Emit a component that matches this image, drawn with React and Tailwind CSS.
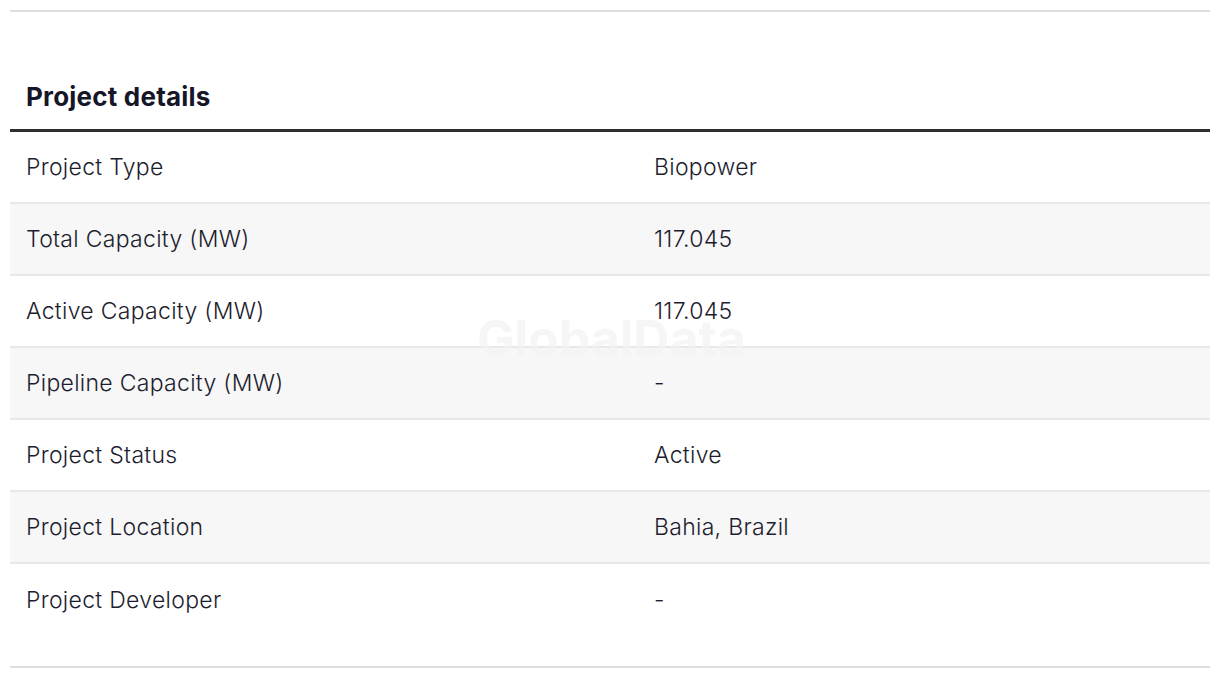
const rows = [
  ["Project Type", "Biopower"],
  ["Total Capacity (MW)", "117.045"],
  ["Active Capacity (MW)", "117.045"],
  ["Pipeline Capacity (MW)", "-"],
  ["Project Status", "Active"],
  ["Project Location", "Bahia, Brazil"],
  ["Project Developer", "-"],
];

export default function App() {
  return (
    <div className="w-[1220px] h-[678px] bg-white px-[10px] pt-[10px] font-['Inter',sans-serif] text-[#1d1d2f]">
      <div className="border-t-2 border-[#dddddd]">
        <h2 className="pt-[67px] pb-[14px] px-4 text-[26px] leading-[36px] font-bold tracking-[0.2px] text-[#161629]">
          Project details
        </h2>
        <div className="relative border-t-[3px] border-[#2f2f2f]">
          {rows.map(([label, value], i) => (
            <div
              key={label}
              className={
                "flex h-[72px] items-center text-[23px] font-light tracking-[0.3px] " +
                (i % 2 === 1 ? "bg-[#f7f7f7] " : "bg-white ") +
                (i < rows.length - 1 ? "border-b-2 border-[#e8e8e8]" : "")
              }
            >
              <div className="w-[628px] px-4">{label}</div>
              <div className="px-4">{value}</div>
            </div>
          ))}
          <div className="pointer-events-none absolute left-[467px] top-[176px] text-[50px] leading-[60px] font-bold text-[#f3f3f3] opacity-70">
            GlobalData
          </div>
        </div>
        <div className="h-[30px]" />
        <div className="border-t-2 border-[#dddddd]" />
      </div>
    </div>
  );
}
